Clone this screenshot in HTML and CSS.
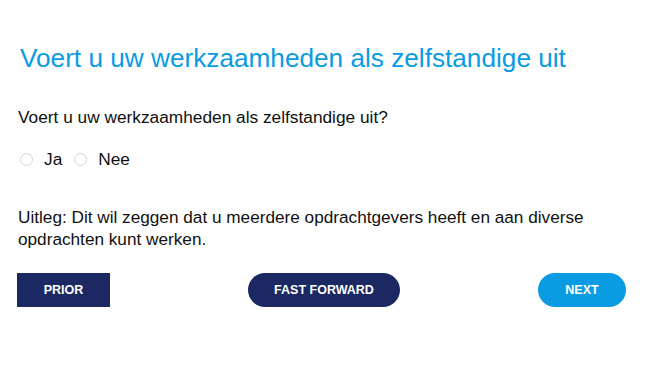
FILE: index.html
```html
<!DOCTYPE html>
<html lang="nl">
<head>
<meta charset="utf-8">
<link rel="stylesheet" href="styles.css">
</head>
<body>
<main class="page">
  <h1 class="title">Voert u uw werkzaamheden als zelfstandige uit</h1>
  <p class="question">Voert u uw werkzaamheden als zelfstandige uit?</p>
  <div class="options">
    <label class="option"><span class="radio"></span>Ja</label>
    <label class="option"><span class="radio"></span>Nee</label>
  </div>
  <p class="explain">Uitleg: Dit wil zeggen dat u meerdere opdrachtgevers heeft en aan diverse opdrachten kunt werken.</p>
  <div class="actions">
    <button class="btn btn-prior">PRIOR</button>
    <button class="btn btn-ff">FAST FORWARD</button>
    <button class="btn btn-next">NEXT</button>
  </div>
</main>
</body>
</html>
```
FILE: styles.css
```css
* { box-sizing: border-box; }
html, body { margin: 0; padding: 0; background: #fff; }
body { font-family: "Liberation Sans", Arial, sans-serif; color: #111; }
.page { padding: 40px 24px 0 18px; }
.title {
  margin: 0 0 0 2px;
  font-size: 26.2px;
  font-weight: normal;
  color: #0a9be3;
  line-height: 36px;
}
.question {
  margin: 30px 0 0 0;
  font-size: 17.3px;
  line-height: 22px;
}
.options {
  display: flex;
  align-items: center;
  margin-top: 20px;
  font-size: 17.3px;
  line-height: 22px;
}
.option { display: flex; align-items: center; margin-right: 10px; }
.radio {
  width: 13px; height: 13px;
  border: 1px solid #d6d6d6;
  border-radius: 50%;
  margin: 0 11px 0 2px;
  background: #fff;
}
.explain {
  margin: 36px 0 0 0;
  font-size: 17.2px;
  line-height: 22px;
  max-width: 600px;
}
.actions {
  display: flex;
  justify-content: space-between;
  margin-top: 23px;
}
.btn {
  border: none;
  height: 34px;
  color: #fff;
  font-family: "Liberation Sans", Arial, sans-serif;
  font-weight: bold;
  font-size: 12.5px;
  padding: 0;
}
.btn-prior { width: 93px; background: #1b2862; margin-left: -1px; }
.btn-ff { width: 152px; background: #1b2862; border-radius: 17px; }
.btn-next { width: 88px; background: #0a9be3; border-radius: 17px; }
```
